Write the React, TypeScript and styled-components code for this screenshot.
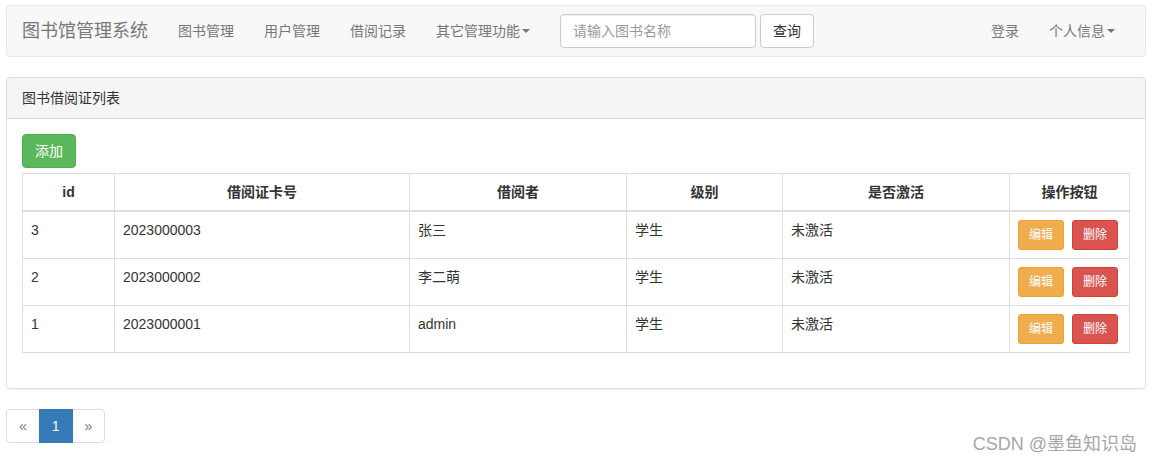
import React from "react";
import styled, { createGlobalStyle } from "styled-components";

const GlobalStyle = createGlobalStyle`
  body {
    margin: 0;
    background: #fff;
    font-family: "Liberation Sans", "Noto Sans CJK SC", sans-serif;
    font-size: 14px;
    line-height: 20px;
    color: #333;
  }
  * {
    box-sizing: border-box;
  }
`;

const readers = [
  { id: 3, card: "2023000003", name: "张三", level: "学生", active: "未激活" },
  { id: 2, card: "2023000002", name: "李二萌", level: "学生", active: "未激活" },
  { id: 1, card: "2023000001", name: "admin", level: "学生", active: "未激活" },
];

const colWidths = [92, 295, 217, 156, 227, 120];

export default function App() {
  return (
    <Page>
      <GlobalStyle />
      <Navbar>
        <Brand>图书馆管理系统</Brand>
        <NavLink>图书管理</NavLink>
        <NavLink>用户管理</NavLink>
        <NavLink>借阅记录</NavLink>
        <NavLink>
          其它管理功能
          <Caret />
        </NavLink>
        <SearchForm>
          <SearchInput type="text" placeholder="请输入图书名称" />
          <Btn variant="default">查询</Btn>
        </SearchForm>
        <NavRight>
          <NavLink>登录</NavLink>
          <NavLink>
            个人信息
            <Caret />
          </NavLink>
        </NavRight>
      </Navbar>

      <Panel>
        <PanelHeading>图书借阅证列表</PanelHeading>
        <PanelBody>
          <Toolbar>
            <Btn variant="success">添加</Btn>
          </Toolbar>
          <Table>
            <colgroup>
              {colWidths.map((w, i) => (
                <col key={i} style={{ width: w }} />
              ))}
            </colgroup>
            <thead>
              <tr>
                <Th>id</Th>
                <Th>借阅证卡号</Th>
                <Th>借阅者</Th>
                <Th>级别</Th>
                <Th>是否激活</Th>
                <Th>操作按钮</Th>
              </tr>
            </thead>
            <tbody>
              {readers.map((r) => (
                <tr key={r.id}>
                  <Td>{r.id}</Td>
                  <Td>{r.card}</Td>
                  <Td>{r.name}</Td>
                  <Td>{r.level}</Td>
                  <Td>{r.active}</Td>
                  <Td>
                    <Actions>
                      <SmallBtn variant="warning">编辑</SmallBtn>
                      <SmallBtn variant="danger">删除</SmallBtn>
                    </Actions>
                  </Td>
                </tr>
              ))}
            </tbody>
          </Table>
        </PanelBody>
      </Panel>

      <Pagination>
        <PageItem disabled>«</PageItem>
        <PageItem active>1</PageItem>
        <PageItem disabled>»</PageItem>
      </Pagination>

      <Watermark>CSDN @墨鱼知识岛</Watermark>
    </Page>
  );
}

const colors: Record<string, { bg: string; border: string; color: string }> = {
  default: { bg: "#fff", border: "#ccc", color: "#333" },
  success: { bg: "#5cb85c", border: "#4cae4c", color: "#fff" },
  warning: { bg: "#f0ad4e", border: "#eea236", color: "#fff" },
  danger: { bg: "#d9534f", border: "#d43f3a", color: "#fff" },
};

const Page = styled.div`
  position: relative;
  width: 1152px;
  height: 464px;
  padding: 5px 6px 0 6px;
  overflow: hidden;
`;

const Navbar = styled.div`
  display: flex;
  align-items: center;
  height: 52px;
  background: #f8f8f8;
  border: 1px solid #e7e7e7;
  border-radius: 4px;
  margin-bottom: 20px;
`;

const Brand = styled.div`
  padding: 15px;
  font-size: 18px;
  line-height: 20px;
  color: #777;
`;

const NavLink = styled.div`
  display: flex;
  align-items: center;
  padding: 15px;
  color: #777;
  font-size: 14px;
  line-height: 20px;
`;

const Caret = styled.span`
  display: inline-block;
  width: 0;
  height: 0;
  margin-left: 2px;
  border-top: 4px solid #777;
  border-left: 4px solid transparent;
  border-right: 4px solid transparent;
`;

const SearchForm = styled.div`
  display: flex;
  align-items: center;
  gap: 4px;
  padding: 0 15px;
`;

const SearchInput = styled.input`
  width: 196px;
  height: 34px;
  padding: 6px 12px;
  font-family: inherit;
  font-size: 14px;
  color: #555;
  border: 1px solid #ccc;
  border-radius: 4px;
  box-shadow: inset 0 1px 1px rgba(0, 0, 0, 0.075);
  outline: none;

  &::placeholder {
    color: #999;
  }
`;

const NavRight = styled.div`
  display: flex;
  margin-left: auto;
  margin-right: 15px;
`;

const Btn = styled.button<{ variant: string }>`
  height: 34px;
  padding: 6px 12px;
  font-family: inherit;
  font-size: 14px;
  line-height: 20px;
  border-radius: 4px;
  border: 1px solid ${(p) => colors[p.variant].border};
  background: ${(p) => colors[p.variant].bg};
  color: ${(p) => colors[p.variant].color};
`;

const SmallBtn = styled.button<{ variant: string }>`
  height: 30px;
  padding: 5px 10px;
  font-family: inherit;
  font-size: 12px;
  line-height: 18px;
  border-radius: 3px;
  border: 1px solid ${(p) => colors[p.variant].border};
  background: ${(p) => colors[p.variant].bg};
  color: ${(p) => colors[p.variant].color};
`;

const Panel = styled.div`
  border: 1px solid #ddd;
  border-radius: 4px;
  box-shadow: 0 1px 1px rgba(0, 0, 0, 0.05);
  margin-bottom: 20px;
`;

const PanelHeading = styled.div`
  padding: 10px 15px;
  background: #f5f5f5;
  border-bottom: 1px solid #ddd;
  border-radius: 3px 3px 0 0;
  color: #333;
`;

const PanelBody = styled.div`
  padding: 15px;
`;

const Toolbar = styled.div`
  display: flex;
  margin-bottom: 5px;
`;

const Table = styled.table`
  width: 1107px;
  table-layout: fixed;
  border-collapse: collapse;
  border-spacing: 0;
  margin-bottom: 20px;
`;

const Th = styled.th`
  padding: 8px;
  border: 1px solid #ddd;
  border-bottom: 2px solid #ddd;
  font-weight: bold;
  text-align: center;
  line-height: 20px;
`;

const Td = styled.td`
  padding: 8px;
  border: 1px solid #ddd;
  vertical-align: top;
  line-height: 20px;
`;

const Actions = styled.div`
  display: flex;
  gap: 8px;
`;

const Pagination = styled.div`
  display: inline-flex;
`;

const PageItem = styled.div<{ active?: boolean; disabled?: boolean }>`
  height: 34px;
  padding: 6px 12px;
  line-height: 20px;
  font-size: 14px;
  margin-left: -1px;
  border: 1px solid ${(p) => (p.active ? "#337ab7" : "#ddd")};
  background: ${(p) => (p.active ? "#337ab7" : "#fff")};
  color: ${(p) => (p.active ? "#fff" : p.disabled ? "#777" : "#337ab7")};
  position: relative;
  z-index: ${(p) => (p.active ? 2 : 1)};

  &:first-child {
    margin-left: 0;
    border-radius: 4px 0 0 4px;
  }
  &:last-child {
    border-radius: 0 4px 4px 0;
  }
`;

const Watermark = styled.div`
  position: absolute;
  right: 15px;
  bottom: 8px;
  font-size: 18px;
  color: #a6a6a6;
  line-height: 24px;
`;
